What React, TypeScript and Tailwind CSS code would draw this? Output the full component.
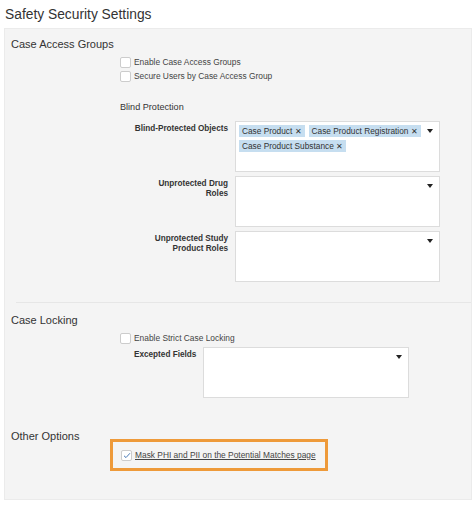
import type { ReactNode } from 'react';

function Checkbox({ checked = false }: { checked?: boolean }) {
  return (
    <span className="w-[11px] h-[11px] shrink-0 bg-white border border-[#cccccc] rounded-[2px] flex items-center justify-center">
      {checked && (
        <svg width="8" height="7" viewBox="0 0 8 7" fill="none">
          <path d="M1 3.8 L3 5.6 L7 1.2" stroke="#4a7bb7" strokeWidth="1" />
        </svg>
      )}
    </span>
  );
}

function CheckRow({ label, checked, underline }: { label: string; checked?: boolean; underline?: boolean }) {
  return (
    <div className="h-[14px] flex items-center gap-[3px] text-[8.4px] text-[#444] whitespace-nowrap">
      <Checkbox checked={checked} />
      <span className={underline ? 'underline' : ''}>{label}</span>
    </div>
  );
}

function Tag({ children }: { children: ReactNode }) {
  return (
    <span className="h-[12px] px-[3px] bg-[#c6def0] text-[8.3px] leading-[12px] text-[#333] whitespace-nowrap">
      {children} <span>✕</span>
    </span>
  );
}

function MultiSelect({ width, children }: { width: string; children?: ReactNode }) {
  return (
    <div className={`${width} h-[51px] shrink-0 bg-white border border-[#dcdcdc] relative pl-[3px] pt-[3px] pr-[16px]`}>
      <div className="flex flex-wrap gap-x-[4px] gap-y-[3px]">{children}</div>
      <span className="absolute right-[6px] top-[7px] w-0 h-0 border-l-[3px] border-r-[3px] border-t-[4px] border-l-transparent border-r-transparent border-t-[#222]" />
    </div>
  );
}

function FieldRow({ label, children }: { label: ReactNode; children?: ReactNode }) {
  return (
    <div className="flex gap-[7px]">
      <div className="w-[108px] text-right font-bold text-[8.2px] leading-[10px] text-[#333] pt-[3px]">{label}</div>
      <MultiSelect width="w-[205px]">{children}</MultiSelect>
    </div>
  );
}

export default function App() {
  return (
    <div className="w-[474px] h-[508px] bg-white text-[#333] font-['Liberation_Sans',Arial,sans-serif]">
      <h1 className="h-[28px] pl-[5px] pt-[5px] text-[13.8px] leading-[20px]">Safety Security Settings</h1>
      <div className="ml-[4px] w-[468px] h-[472px] bg-[#f4f4f4] border border-[#ebebeb]">
        <h2 className="mt-[7px] pl-[6px] text-[11px] leading-[16px]">Case Access Groups</h2>
        <div className="pl-[115px] mt-[3px]">
          <CheckRow label="Enable Case Access Groups" />
          <CheckRow label="Secure Users by Case Access Group" />
          <div className="mt-[18px] text-[9.1px] leading-[12px] text-[#333]">Blind Protection</div>
          <div className="mt-[8px] flex flex-col gap-[4px]">
            <FieldRow label="Blind-Protected Objects">
              <Tag>Case Product</Tag>
              <Tag>Case Product Registration</Tag>
              <Tag>Case Product Substance</Tag>
            </FieldRow>
            <FieldRow label={<>Unprotected Drug<br />Roles</>} />
            <FieldRow label={<>Unprotected Study<br />Product Roles</>} />
          </div>
        </div>
        <div className="mt-[20px] ml-[11px] border-t border-[#e6e6e6]" />
        <h2 className="mt-[9px] pl-[6px] text-[11px] leading-[16px]">Case Locking</h2>
        <div className="pl-[115px] mt-[3px]">
          <CheckRow label="Enable Strict Case Locking" />
          <div className="mt-[2px] pl-[14px] flex">
            <div className="w-[69px] font-bold text-[8.2px] leading-[10px] text-[#333] pt-[3px]">Excepted Fields</div>
            <MultiSelect width="w-[206px]" />
          </div>
        </div>
        <h2 className="mt-[30px] pl-[6px] text-[11px] leading-[16px]">Other Options</h2>
        <div className="ml-[105px] -mt-[5px] w-[218px] h-[32px] border-[3px] border-[#ee9a3a] flex items-center pl-[8px]">
          <CheckRow label="Mask PHI and PII on the Potential Matches page" checked underline />
        </div>
      </div>
    </div>
  );
}
